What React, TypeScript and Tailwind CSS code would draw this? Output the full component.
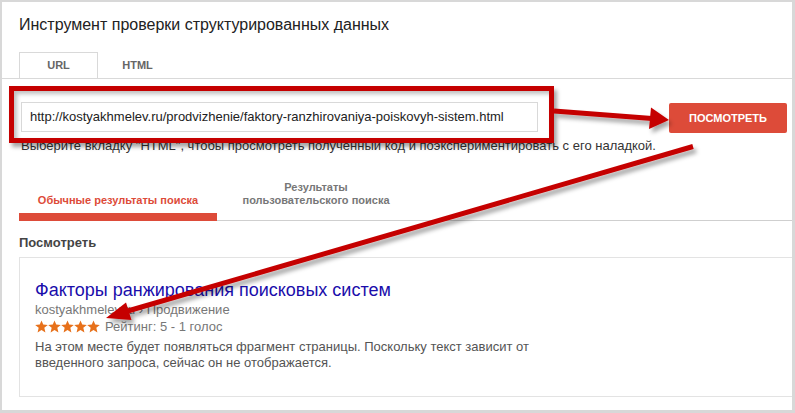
import React from "react";

const Star = () => (
  <svg width="13" height="13" viewBox="0 0 12 12" className="block">
    <polygon
      points="6,0.4 7.6,4.2 11.8,4.5 8.6,7.2 9.6,11.5 6,9.2 2.4,11.5 3.4,7.2 0.2,4.5 4.4,4.2"
      fill="#e7711b"
    />
  </svg>
);

export default function App() {
  return (
    <div className="relative w-[795px] h-[413px] overflow-hidden bg-white border-t-2 border-l-2 border-r-[3px] border-b-[3px] border-[#d8d8d8] font-['Liberation_Sans',Arial,sans-serif]">
      {/* Title */}
      <div className="pt-[13px] pl-[17px] text-[16px] leading-[20px] text-[#222]">
        Инструмент проверки структурированных данных
      </div>

      {/* Tabs URL / HTML */}
      <div className="mt-[17px] flex border-b border-[#d9d9d9] pl-[17px]">
        <div className="w-[79px] h-[26px] border-t border-l border-r border-[#d9d9d9] flex items-center justify-center text-[11px] font-bold text-[#666]">
          URL
        </div>
        <div className="w-[79px] h-[26px] flex items-center justify-center text-[11px] font-bold text-[#666]">
          HTML
        </div>
      </div>

      {/* Input row */}
      <div className="mt-[23px] flex items-start pl-[19px]">
        <div className="w-[517px] h-[30px] border border-[#d9d9d9] flex items-center pl-[8px] text-[13px] text-[#222] whitespace-nowrap overflow-hidden">
          http://kostyakhmelev.ru/prodvizhenie/faktory-ranzhirovaniya-poiskovyh-sistem.html
        </div>
        <div className="ml-[131px] mt-px w-[118px] h-[30px] rounded-[2px] bg-[#dd4b39] flex items-center justify-center text-[11px] font-bold text-white">
          ПОСМОТРЕТЬ
        </div>
      </div>

      {/* Helper text */}
      <div className="mt-[5px] pl-[19px] text-[13px] leading-[16px] text-[#333] whitespace-nowrap">
        Выберите вкладку "HTML", чтобы просмотреть полученный код и поэкспериментировать с его наладкой.
      </div>

      {/* Result tabs */}
      <div className="mt-[27px] ml-[17px] flex items-end border-b border-[#cfcfcf]">
        <div className="w-[198px] flex flex-col">
          <div className="text-center text-[11px] leading-[13px] font-bold text-[#dd4b39]">
            Обычные результаты поиска
          </div>
          <div className="mt-[6px] h-[8px] -mb-px bg-[#dd4b39]" />
        </div>
        <div className="w-[198px] pb-[13px] text-center text-[11px] leading-[13px] font-bold text-[#777]">
          Результаты
          <br />
          пользовательского поиска
        </div>
      </div>

      {/* Посмотреть */}
      <div className="mt-[14px] pl-[17px] text-[13px] leading-[16px] font-bold text-[#444]">
        Посмотреть
      </div>

      {/* Card */}
      <div className="mt-[6px] ml-[17px] border-t border-l border-b border-[#e3e3e3] pt-[21px] pb-[25px] pl-[15px]">
        <div className="text-[18px] leading-[22px] text-[#1a0dab]">
          Факторы ранжирования поисковых систем
        </div>
        <div className="mt-px text-[13px] leading-[16px] text-[#777]">
          kostyakhmelev.ru › Продвижение
        </div>
        <div className="flex items-center h-[17px]">
          <div className="flex">
            <Star />
            <Star />
            <Star />
            <Star />
            <Star />
          </div>
          <span className="ml-[5px] text-[13px] leading-[16px] text-[#777]">
            Рейтинг: 5 - 1 голос
          </span>
        </div>
        <div className="mt-[4px] text-[13px] leading-[16px] text-[#545454]">
          На этом месте будет появляться фрагмент страницы. Поскольку текст зависит от
          <br />
          введенного запроса, сейчас он не отображается.
        </div>
      </div>

      {/* Annotation: red box around input */}
      <div className="absolute left-[7px] top-[84px] w-[545px] h-[57px] border-[5px] border-[#c50000] shadow-[3px_4px_4px_rgba(0,0,0,0.35),inset_3px_3px_4px_rgba(0,0,0,0.25)] pointer-events-none" />

      {/* Annotation arrows */}
      <svg
        className="absolute left-[-2px] top-[-2px] pointer-events-none"
        width="795"
        height="413"
        viewBox="0 0 795 413"
      >
        <defs>
          <filter id="sh" x="-20%" y="-20%" width="140%" height="140%">
            <feDropShadow dx="3" dy="4" stdDeviation="2" floodColor="#000" floodOpacity="0.35" />
          </filter>
        </defs>
        <g filter="url(#sh)">
          <line x1="554" y1="111" x2="652" y2="118.5" stroke="#c50000" strokeWidth="5" />
          <polygon points="669,120 651,107.5 649,129" fill="#c50000" />
          <line x1="693" y1="146.5" x2="126" y2="311.5" stroke="#c50000" strokeWidth="5" />
          <polygon points="106,318 126,302.5 131.5,320" fill="#c50000" />
        </g>
      </svg>
    </div>
  );
}
